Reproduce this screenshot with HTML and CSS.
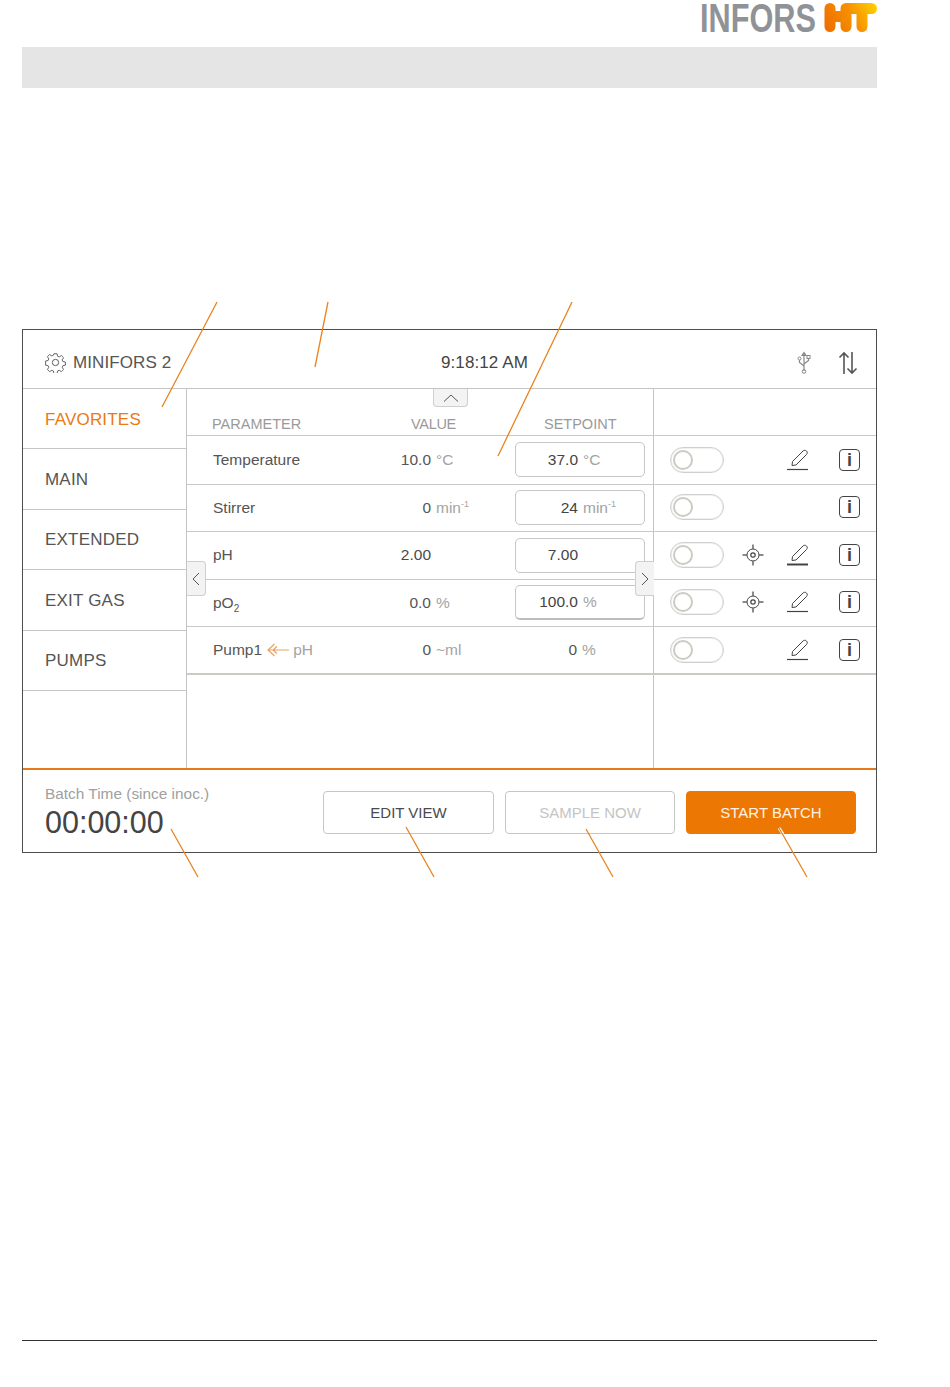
FILE: index.html
```html
<!DOCTYPE html>
<html lang="en">
<head>
<meta charset="utf-8">
<title>MINIFORS 2</title>
<link rel="stylesheet" href="styles.css">
</head>
<body>
<div class="page">
  <header class="brand">
    <svg class="brand-name" viewBox="0 0 116 29" width="116" height="29"><text x="0" y="29" textLength="116" lengthAdjust="spacingAndGlyphs">INFORS</text></svg>
    <svg class="brand-mark" viewBox="0 0 53 29" width="53" height="29">
      <defs>
        <linearGradient id="ht" gradientUnits="userSpaceOnUse" x1="4" y1="26" x2="50" y2="2">
          <stop offset="0" stop-color="#ee7000"/>
          <stop offset="0.55" stop-color="#f79200"/>
          <stop offset="1" stop-color="#ffcc00"/>
        </linearGradient>
      </defs>
      <path d="M6 5.500V23.500M6 13.500H22M22 5.500V23.500M22 5.500H47.500M38 5.500V23.500" fill="none" stroke="url(#ht)" stroke-width="11" stroke-linecap="round" stroke-linejoin="round"/>
    </svg>
  </header>
  <div class="band"></div>

  <section class="screen">
    <div class="topbar">
      <div class="device">
        <svg class="gear" viewBox="0 0 20 20" width="21" height="21"><path d="M8.4 1.2h3.2l.5 2.5 1.6.7 2.200-1.400 2.200 2.200-1.400 2.200.7 1.600 2.500.5v3.200l-2.500.5-.7 1.600 1.400 2.200-2.200 2.200-2.200-1.400-1.600.7-.5 2.500H8.400l-.5-2.500-1.600-.7-2.200 1.400-2.200-2.200 1.400-2.200-.7-1.600-2.500-.5V8.500l2.500-.5.7-1.600-1.400-2.200 2.200-2.200 2.200 1.400 1.600-.7z" transform="translate(.500 .500) scale(.95)" fill="none" stroke="#555" stroke-width=".9"/><circle cx="10" cy="10" r="3" fill="none" stroke="#555" stroke-width=".9"/></svg>
        <span>MINIFORS 2</span>
      </div>
      <div class="clock">9:18:12 AM</div>
      <div class="status">
        <svg class="usb" viewBox="0 0 16 24" width="16" height="24"><path d="M8 1.500V20M8 1.500L6 4.500H10ZM8 15L3.500 11.500V9M8 13L12.500 9.500V7" fill="none" stroke="#888" stroke-width="1.200"/><circle cx="3.500" cy="7.500" r="1.500" fill="none" stroke="#888"/><rect x="11" y="4.500" width="3" height="3" fill="none" stroke="#888"/><circle cx="8" cy="20.500" r="1.800" fill="none" stroke="#888"/></svg>
        <svg class="sync" viewBox="0 0 20 24" width="20" height="24"><path d="M6 23V2M1.500 6.500L6 2L10.500 6.500M14 1V22M9.500 17.500L14 22L18.500 17.500" fill="none" stroke="#555" stroke-width="1.600"/></svg>
      </div>
    </div>

    <div class="middle">
      <nav class="tabs">
        <a class="tab tab-active">FAVORITES</a>
        <a class="tab">MAIN</a>
        <a class="tab">EXTENDED</a>
        <a class="tab">EXIT GAS</a>
        <a class="tab">PUMPS</a>
      </nav>

      <div class="main">
        <div class="row row-head">
          <span class="name">PARAMETER</span>
          <span class="head-value">VALUE</span>
          <span class="head-set">SETPOINT</span>
          <span class="actions"></span>
        </div>

        <div class="row row-1">
          <span class="name">Temperature</span>
          <span class="num">10.0</span><span class="unit">°C</span>
          <span class="box"><span class="num">37.0</span><span class="unit">°C</span></span>
          <span class="actions">
            <span class="toggle"></span>
            <svg class="act-edit" viewBox="0 0 24 24" width="24" height="24"><use href="#pencil"/></svg>
            <span class="info">i</span>
          </span>
        </div>

        <div class="row row-2">
          <span class="name">Stirrer</span>
          <span class="num">0</span><span class="unit">min<sup>-1</sup></span>
          <span class="box"><span class="num">24</span><span class="unit">min<sup>-1</sup></span></span>
          <span class="actions">
            <span class="toggle"></span>
            <span class="info">i</span>
          </span>
        </div>

        <div class="row row-3">
          <span class="name">pH</span>
          <span class="num num-dark">2.00</span><span class="unit"></span>
          <span class="box"><span class="num">7.00</span><span class="unit"></span></span>
          <span class="actions">
            <span class="toggle"></span>
            <svg class="act-target" viewBox="0 0 22 22" width="22" height="22"><use href="#target"/></svg>
            <svg class="act-edit" viewBox="0 0 24 24" width="24" height="24"><use href="#pencil-bold"/></svg>
            <span class="info">i</span>
          </span>
        </div>

        <div class="row row-4">
          <span class="name">pO<sub>2</sub></span>
          <span class="num">0.0</span><span class="unit">%</span>
          <span class="box box-shadow"><span class="num">100.0</span><span class="unit">%</span></span>
          <span class="actions">
            <span class="toggle"></span>
            <svg class="act-target" viewBox="0 0 22 22" width="22" height="22"><use href="#target"/></svg>
            <svg class="act-edit" viewBox="0 0 24 24" width="24" height="24"><use href="#pencil"/></svg>
            <span class="info">i</span>
          </span>
        </div>

        <div class="row row-5">
          <span class="name name-pump">Pump1
            <svg class="pump-arrow" viewBox="0 0 24 14" width="24" height="14"><path d="M23 7H2M8.500 1L2 7L8.500 13M11 3.500L7 7L11 10.500" fill="none" stroke="#e9a25e" stroke-width="1.200"/></svg>
            <span class="pump-src">pH</span>
          </span>
          <span class="num">0</span><span class="unit">~ml</span>
          <span class="plain"><span class="num">0</span><span class="unit">%</span></span>
          <span class="actions">
            <span class="toggle"></span>
            <svg class="act-edit" viewBox="0 0 24 24" width="24" height="24"><use href="#pencil"/></svg>
            <span class="info">i</span>
          </span>
        </div>

        <div class="filler"><span class="filler-left"></span></div>

        <span class="nudge nudge-up"><svg viewBox="0 0 16 8" width="16" height="8"><path d="M1 7.500L8 1L15 7.500" fill="none" stroke="#555"/></svg></span>
        <span class="nudge nudge-left"><svg viewBox="0 0 8 14" width="8" height="14"><path d="M7 1L1 7L7 13" fill="none" stroke="#555"/></svg></span>
        <span class="nudge nudge-right"><svg viewBox="0 0 8 14" width="8" height="14"><path d="M1 1L7 7L1 13" fill="none" stroke="#555"/></svg></span>
      </div>
    </div>

    <div class="bottom">
      <div class="batch">
        <div class="batch-label">Batch Time (since inoc.)</div>
        <div class="batch-time">00:00:00</div>
      </div>
      <div class="buttons">
        <button class="btn">EDIT VIEW</button>
        <button class="btn btn-disabled">SAMPLE NOW</button>
        <button class="btn btn-primary">START BATCH</button>
      </div>
    </div>
  </section>

  <footer class="rule"></footer>

  <svg class="callouts" viewBox="0 0 950 1387" width="950" height="1387">
    <path class="halo" d="M779 828L783 834"/>
    <path class="lead" d="M217 302L162 407M328 302L315 367M572 302L498 456M171 829L198 877M406 827L434 877M586 829L613 877M779 828L807 877"/>
  </svg>

  <svg class="defs" width="0" height="0">
    <defs>
      <g id="pencil" fill="none" stroke="#444">
        <path d="M6.500 13.500L17 3C18 2 19.500 2 20.500 3C21.500 4 21.500 5.500 20.500 6.500L10 17L6 17.500Z" stroke-width="1"/>
        <path d="M1 21.500H22" stroke-width="1.200"/>
      </g>
      <g id="pencil-bold" fill="none" stroke="#444">
        <path d="M6.500 13.500L17 3C18 2 19.500 2 20.500 3C21.500 4 21.500 5.500 20.500 6.500L10 17L6 17.500Z" stroke-width="1"/>
        <path d="M1 21.500H22" stroke-width="2"/>
      </g>
      <g id="target" fill="none" stroke="#444">
        <circle cx="11" cy="11" r="6"/>
        <circle cx="11" cy="11" r="2.200" stroke-width="1.200"/>
        <path d="M11 0.500V5M11 17V21.500M0.500 11H5M17 11H21.500" stroke="#666" stroke-width="1.500"/>
      </g>
    </defs>
  </svg>
</div>
</body>
</html>
```
FILE: styles.css
```css
* { box-sizing: border-box; }
html, body { margin: 0; padding: 0; background: #fff; }
body { font-family: "Liberation Sans", Arial, sans-serif; color: #4a4a4a; }

.page { position: relative; width: 950px; height: 1387px; padding: 3px 73px 0 22px; }

.brand { height: 44px; display: flex; justify-content: flex-end; align-items: flex-start; gap: 8px; }
.brand-name { display: block; overflow: visible; font-weight: 700; font-size: 40.500px; fill: #8f9296; }
.brand-mark { display: block; }

.band { height: 41px; background: #e5e5e5; margin-bottom: 241px; }

.screen { height: 524px; border: 1px solid #4d4d4d; display: flex; flex-direction: column; }

.topbar {
  height: 59px; flex: none; border-bottom: 1px solid #c4c4c4;
  display: grid; grid-template-columns: 1fr 1fr 1fr; align-items: center;
  padding: 7px 18px 0 22px; font-size: 17px; letter-spacing: .1px;
}
.device { display: flex; align-items: center; gap: 7px; color: #555; }
.clock { text-align: center; color: #444; padding-left: 66px; white-space: nowrap; }
.status { display: flex; justify-content: flex-end; align-items: center; gap: 26px; }
.gear, .usb, .sync { display: block; }

.middle { flex: 1; display: flex; min-height: 0; }

.tabs { width: 164px; flex: none; border-right: 1px solid #c4c4c4; display: flex; flex-direction: column; }
.tab {
  height: 60.400px; border-bottom: 1px solid #c4c4c4; padding: 2px 0 0 22px;
  display: flex; align-items: center; font-size: 17px; letter-spacing: .2px; color: #555;
}
.tab-active { color: #ea7a12; }

.main { flex: 1; position: relative; display: flex; flex-direction: column; }

.row {
  display: grid; grid-template-columns: 193px 51px 84px 130px 8px 1fr; align-items: center;
  border-bottom: 1px solid #c8c8c8; font-size: 15.500px; flex: none;
}
.row-head { height: 47px; align-items: stretch; color: #9a9a9a; font-size: 14.500px; }
.row-1 { height: 49px; }
.row-2 { height: 47px; }
.row-3 { height: 48px; }
.row-4 { height: 47px; }
.row-5 { height: 48px; border-bottom: 2px solid #cbcbc6; }

.name { padding-left: 26px; color: #555; white-space: nowrap; margin-bottom: 1px; }
.row-head .name { color: #9a9a9a; padding: 27px 0 0 25px; line-height: 16px; margin: 0; }
.head-value { grid-column: 2 / 4; padding: 27px 0 0 31px; line-height: 16px; letter-spacing: -.3px; }
.head-set { grid-column: 4; padding: 27px 0 0 29px; line-height: 16px; }
.row-head .actions { grid-column: 6; }

.name sub { font-size: 10px; line-height: 0; }
.name-pump { display: flex; align-items: center; gap: 4px; }
.pump-arrow { display: block; }
.pump-src { color: #a3a3a3; margin-left: -1px; }

.num { text-align: right; color: #555; white-space: nowrap; margin-bottom: 1px; }
.num-dark { color: #4a4a4a; }
.unit { color: #a3a3a3; padding-left: 5px; white-space: nowrap; margin-bottom: 1px; }
.unit sup { font-size: 9px; line-height: 0; vertical-align: 6px; }

.box, .plain { display: grid; grid-template-columns: 62px 1fr; align-items: center; }
.box { height: 35px; margin-bottom: 1px; border: 1px solid #c6c6c6; border-radius: 5px; color: #444; }
.box .num, .box .unit { margin-bottom: 0; }
.box .num { color: #444; }
.plain .num, .plain .unit { margin-bottom: 0; }
.plain { margin-bottom: 1px; }
.box-shadow { border-bottom: 2px solid #bdbdbd; }

.actions {
  grid-column: 6; align-self: stretch; border-left: 1px solid #c4c4c4;
  display: grid; grid-template-columns: 88px 44px 53px 21px; align-items: center; padding-bottom: 1px;
}
.row-2 .actions, .row-4 .actions { padding-bottom: 2px; }
.toggle {
  grid-column: 1; margin-left: 16px; display: block; position: relative;
  width: 54px; height: 26px; border: 1px solid #cfcfcf; border-radius: 13px;
  box-shadow: inset 0 0 0 1px #f0f0f0;
}
.toggle::before {
  content: ""; box-sizing: border-box; position: absolute; left: 2px; top: 2px; width: 20px; height: 20px;
  border: 2px solid #cbcbc4; border-radius: 50%;
}
.act-target { grid-column: 2; display: block; }
.act-edit { grid-column: 3; display: block; }
.info {
  grid-column: 4; width: 21px; height: 22px; border: 1px solid #444; border-radius: 4px;
  display: flex; align-items: center; justify-content: center;
  font: 700 18px/1 "Liberation Sans", sans-serif; color: #444;
}

.filler { flex: 1; display: grid; grid-template-columns: 467px 1fr; }
.filler-left { border-right: 1px solid #c4c4c4; }

.nudge {
  position: absolute; display: flex; align-items: center; justify-content: center;
  background: #f3f3f3; border: 1px solid #cfcfcf;
}
.nudge-up { left: 246px; top: 0; width: 35px; height: 18px; border-top: 0; border-radius: 0 0 4px 4px; }
.nudge-left { left: 0; top: 172px; width: 19px; height: 35px; border-left: 0; border-radius: 0 4px 4px 0; }
.nudge-right { left: 448px; top: 172px; width: 19px; height: 35px; border-right: 0; border-radius: 4px 0 0 4px; }

.bottom {
  height: 84px; flex: none; border-top: 2px solid #e8791a;
  display: flex; justify-content: space-between; padding: 21px 20px 0 22px;
}
.batch-label { font-size: 15.400px; color: #a0a0a0; margin-top: -6px; line-height: 18px; }
.batch-time { font-size: 30.500px; color: #444; line-height: 36px; margin-top: 1px; }

.buttons { display: flex; gap: 11px; }
.btn {
  width: 171px; height: 43px; font: 15px "Liberation Sans", sans-serif; color: #4a4a4a;
  background: #fff; border: 1px solid #c6c6c6; border-radius: 4px; padding: 0;
}
.btn-disabled { width: 170px; color: #c4c4c4; }
.btn-primary { width: 170px; background: #ec7703; border-color: #ec7703; color: #fff3e6; }

.rule { position: absolute; left: 22px; top: 1340px; width: 855px; height: 1px; background: #333; }

.callouts { position: absolute; left: 0; top: 0; pointer-events: none; }
.lead { fill: none; stroke: #e8841f; stroke-width: 1.300; }
.halo { fill: none; stroke: #fff; stroke-width: 3; }
.defs { position: absolute; }
```
